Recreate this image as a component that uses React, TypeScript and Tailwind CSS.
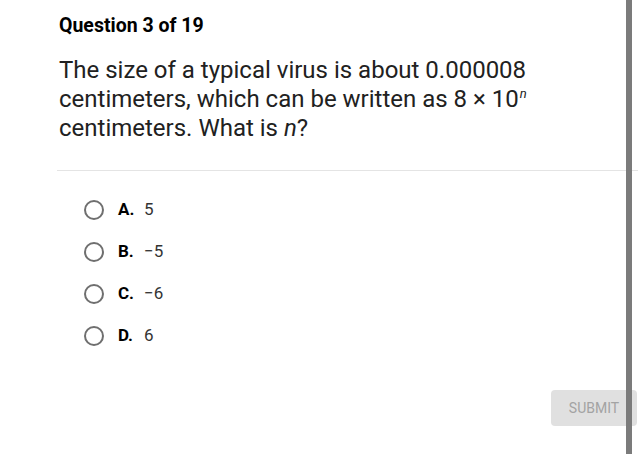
const options = [
  { letter: "A.", value: "5" },
  { letter: "B.", value: "\u22125" },
  { letter: "C.", value: "\u22126" },
  { letter: "D.", value: "6" },
];

export default function App() {
  return (
    <div className="relative h-[454px] w-[638px] overflow-hidden bg-white font-['Roboto',sans-serif] text-[#212121]">
      <div className="pl-[59px] pt-[14px]">
        <h2 className="text-[19.5px] font-bold leading-[23px] text-black">Question 3 of 19</h2>
        <p className="mt-[19px] w-[540px] text-[24px] leading-[29px] text-[#212121]">
          The size of a typical virus is about 0.000008 centimeters, which can be written as 8 × 10
          <span className="relative -top-[9px] ml-[1px] text-[13px] leading-none italic">n</span> centimeters. What is{" "}
          <i>n</i>?
        </p>
      </div>

      <div className="ml-[57px] mt-[27px] h-px bg-[#e4e4e4]" />

      <div className="ml-[84px] mt-[29px] flex flex-col gap-[22px]">
        {options.map((o) => (
          <div key={o.letter} className="flex h-[20px] items-center">
            <span className="h-[20px] w-[20px] shrink-0 rounded-full border-2 border-[#6f6f6f]" />
            <span className="ml-[14px] w-[26px] text-[17px] font-bold text-black">{o.letter}</span>
            <span className="text-[17px] text-[#333]">{o.value}</span>
          </div>
        ))}
      </div>

      <div className="mt-[44px] flex justify-end">
        <button className="mr-[1px] h-[36px] w-[86px] rounded-[4px] bg-[#e0e0e0] text-[14px] text-[#a3a3a3]">
          SUBMIT
        </button>
      </div>

      <div className="absolute top-0 left-[626px] h-full w-[6px] bg-[#7b7b7b]" />
    </div>
  );
}
